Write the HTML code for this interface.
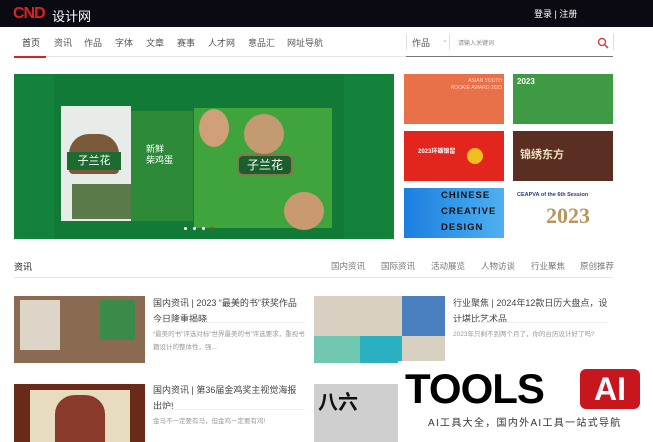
<!DOCTYPE html>
<html><head><meta charset="utf-8"><style>
*{margin:0;padding:0;box-sizing:border-box}
body{width:653px;height:442px;overflow:hidden;background:#fff;font-family:"Liberation Sans","Noto Sans CJK SC",sans-serif;position:relative}
.a{position:absolute}
.hdr{left:0;top:0;width:653px;height:27px;background:#0b0a12}
.nav span{position:absolute;top:36px;font-size:9px;color:#555}
.t{font-size:9px;color:#444;line-height:16px}
.d{font-size:6.5px;color:#999;line-height:16px}
.tab{font-size:8.5px;color:#777;top:260px}
</style></head><body>
<div class="a hdr"></div>
<div class="a" style="left:13px;top:5px;font-size:16px;font-weight:bold;color:#e02020;letter-spacing:-1px">CND</div>
<div class="a" style="left:52px;top:6px;font-size:13px;color:#fff">设计网</div>
<div class="a" style="left:534px;top:7px;font-size:9px;color:#fff">登录 | 注册</div>
<div class="nav">
<span style="left:22px;color:#333">首页</span><span style="left:54px">资讯</span><span style="left:84px">作品</span><span style="left:115px">字体</span><span style="left:146px">文章</span><span style="left:177px">赛事</span><span style="left:208px">人才网</span><span style="left:248px">意品汇</span><span style="left:287px">网址导航</span>
<span style="left:412px">作品</span><span style="left:442px;color:#aaa;font-size:7px">⌄</span><span style="left:458px;font-size:6px;top:38px;color:#888">请输入关键词</span>
</div>
<div class="a" style="left:406px;top:34px;width:1px;height:16px;background:#ddd"></div>
<div class="a" style="left:449px;top:34px;width:1px;height:16px;background:#ddd"></div>
<div class="a" style="left:613px;top:34px;width:1px;height:16px;background:#ddd"></div>
<svg class="a" style="left:597px;top:37px" width="12" height="12"><circle cx="5" cy="5" r="3.5" stroke="#e03030" stroke-width="1.3" fill="none"/><path d="M7.5 7.5L11 11" stroke="#e03030" stroke-width="1.4"/></svg>
<div class="a" style="left:14px;top:56px;width:32px;height:1.5px;background:#e02020"></div>
<div class="a" style="left:46px;top:56px;width:360px;height:1px;background:#e6e6e6"></div>
<div class="a" style="left:406px;top:56px;width:207px;height:1px;background:#777"></div>
<!-- banner -->
<div class="a" style="left:14px;top:74px;width:380px;height:165px;background:#13823a;overflow:hidden">
<div class="a" style="left:40px;top:0;width:290px;height:165px;background:#117a36"></div>
<div class="a" style="left:47px;top:32px;width:70px;height:115px;background:#e8ece8"></div>
<div class="a" style="left:55px;top:60px;width:50px;height:40px;background:#7a5a3a;border-radius:20px 20px 4px 4px"></div>
<div class="a" style="left:53px;top:78px;width:54px;height:18px;background:#1d6b30;color:#fff;font-size:11px;text-align:center;line-height:18px">子兰花</div>
<div class="a" style="left:58px;top:110px;width:85px;height:35px;background:#5b7a4a"></div>
<div class="a" style="left:117px;top:37px;width:62px;height:110px;background:#2c8a38"></div>
<div class="a" style="left:132px;top:70px;color:#fff;font-size:9px;line-height:11px">新鲜<br>柴鸡蛋</div>
<div class="a" style="left:180px;top:34px;width:138px;height:120px;background:#3fa43b"></div>
<div class="a" style="left:230px;top:40px;width:40px;height:40px;background:#c49a72;border-radius:50%"></div>
<div class="a" style="left:185px;top:35px;width:30px;height:38px;background:#d0a078;border-radius:50%"></div>
<div class="a" style="left:270px;top:118px;width:40px;height:38px;background:#c99a70;border-radius:50%"></div>
<div class="a" style="left:223px;top:80px;width:56px;height:22px;background:#1b5e2b;border:2px solid #8a7450;border-radius:6px;color:#fff;font-size:12px;text-align:center;line-height:18px">子兰花</div>
<div class="a" style="left:170px;top:153px;width:3px;height:3px;border-radius:50%;background:#fff"></div>
<div class="a" style="left:179px;top:153px;width:3px;height:3px;border-radius:50%;background:#fff"></div>
<div class="a" style="left:188px;top:153px;width:3px;height:3px;border-radius:50%;background:#fff"></div>
<div class="a" style="left:197px;top:153px;width:3px;height:3px;border-radius:50%;background:#e02020"></div>
</div>
<!-- thumbs -->
<div class="a" style="left:404px;top:74px;width:100px;height:50px;background:#e9714a"></div>
<div class="a" style="left:450px;top:78px;color:#fbd3c0;font-size:5px;line-height:7px;text-align:right;width:52px">ASIAN YOUTH<br>ROOKIE AWARD 2023</div>
<div class="a" style="left:513px;top:74px;width:100px;height:50px;background:#3f9a44"></div>
<div class="a" style="left:517px;top:77px;color:#fff;font-size:8px;font-weight:bold">2023</div>
<div class="a" style="left:404px;top:131px;width:100px;height:50px;background:#e2261e"></div>
<div class="a" style="left:418px;top:146px;color:#fff;font-size:6px;font-weight:bold">2023环雄银留</div>
<div class="a" style="left:467px;top:148px;width:16px;height:16px;background:#f0c020;border-radius:50%"></div>
<div class="a" style="left:513px;top:131px;width:100px;height:50px;background:#5a2e22"></div>
<div class="a" style="left:520px;top:146px;color:#f0e0c0;font-size:11px;font-weight:bold">锦绣东方</div>
<div class="a" style="left:404px;top:188px;width:100px;height:50px;background:linear-gradient(90deg,#1a7fe0,#4fb0f0)"></div>
<div class="a" style="left:441px;top:188px;color:#111;font-size:9.5px;font-weight:bold;letter-spacing:1px;line-height:16px">CHINESE<br>CREATIVE<br>DESIGN</div>
<div class="a" style="left:513px;top:188px;width:100px;height:50px;background:#fff"></div>
<div class="a" style="left:517px;top:192px;color:#2a3a7a;font-size:5.5px;font-weight:bold">CEAPVA of the 6th Session</div>
<div class="a" style="left:546px;top:203px;color:#b8975a;font-size:22px;font-weight:bold;font-family:'Liberation Serif',serif">2023</div>
<!-- section -->
<div class="a" style="left:14px;top:260px;font-size:9px;color:#222">资讯</div>
<div class="a tab" style="left:331px">国内资讯</div>
<div class="a tab" style="left:381px">国际资讯</div>
<div class="a tab" style="left:431px">活动展览</div>
<div class="a tab" style="left:481px">人物访谈</div>
<div class="a tab" style="left:531px">行业聚焦</div>
<div class="a tab" style="left:580px">原创推荐</div>
<div class="a" style="left:14px;top:277px;width:599px;height:1px;background:#e6e6e6"></div>
<!-- articles -->
<div class="a" style="left:14px;top:296px;width:131px;height:67px;background:#8a6a50"></div>
<div class="a" style="left:20px;top:300px;width:40px;height:50px;background:#ddd6c8"></div>
<div class="a" style="left:100px;top:300px;width:35px;height:40px;background:#3a8a4a"></div>
<div class="a t" style="left:153px;top:295px;width:150px">国内资讯 | 2023 “最美的书”获奖作品今日隆重揭晓</div>
<div class="a" style="left:153px;top:322px;width:152px;height:1px;background:#eee"></div>
<div class="a d" style="left:153px;width:152px;line-height:13px;top:328px">“最美的书”评选对标“世界最美的书”评选要求，重视书籍设计的整体性，强...</div>
<div class="a" style="left:314px;top:296px;width:131px;height:67px;background:#d8d0c0"></div>
<div class="a" style="left:402px;top:296px;width:43px;height:40px;background:#4a80c0"></div>
<div class="a" style="left:360px;top:336px;width:42px;height:27px;background:#2ab0c0"></div>
<div class="a" style="left:314px;top:336px;width:46px;height:27px;background:#70c8b0"></div>
<div class="a t" style="left:453px;top:295px;width:155px">行业聚焦 | 2024年12款日历大盘点，设计堪比艺术品</div>
<div class="a" style="left:453px;top:322px;width:155px;height:1px;background:#eee"></div>
<div class="a d" style="left:453px;top:327px">2023年只剩不到两个月了，你的台历设计好了吗?</div>
<div class="a" style="left:14px;top:384px;width:131px;height:58px;background:#6a2a1a"></div>
<div class="a" style="left:30px;top:390px;width:100px;height:52px;background:#e8dcc0"></div>
<div class="a" style="left:55px;top:395px;width:50px;height:47px;background:#8a3a2a;border-radius:40% 40% 0 0"></div>
<div class="a t" style="left:153px;top:382px;width:150px">国内资讯 | 第36届金鸡奖主视觉海报出炉!</div>
<div class="a" style="left:153px;top:409px;width:152px;height:1px;background:#eee"></div>
<div class="a d" style="left:153px;top:414px">金马不一定要有马，但金鸡一定要有鸡!</div>
<div class="a" style="left:314px;top:384px;width:131px;height:58px;background:#cfcfcf"></div>
<div class="a" style="left:318px;top:386px;color:#111;font-size:20px;font-weight:bold">八六</div>
<!-- overlay -->
<div class="a" style="left:398px;top:361px;width:255px;height:81px;background:#fff"></div>
<div class="a" style="left:405px;top:364px;font-size:42px;font-weight:bold;color:#000;letter-spacing:-1px;line-height:50px">TOOLS</div>
<div class="a" style="left:580px;top:369px;width:60px;height:40px;background:#c8161e;border-radius:6px;color:#fff;font-size:32px;font-weight:bold;text-align:center;line-height:40px">AI</div>
<div class="a" style="left:428px;top:414px;font-size:10px;color:#333;letter-spacing:1.3px">AI工具大全，国内外AI工具一站式导航</div>
</body></html>
